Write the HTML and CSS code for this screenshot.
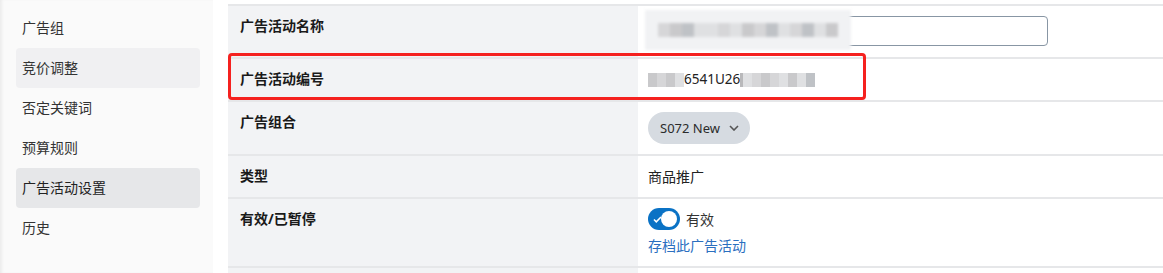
FILE: index.html
```html
<!DOCTYPE html>
<html lang="zh-CN">
<head>
    <meta charset="UTF-8">
    <title>广告活动设置</title>
    <link rel="stylesheet" href="styles.css">
</head>
<body>

    <div class="sidebar">
        <div class="nav-item">广告组</div>
        <div class="nav-item hover">竞价调整</div>
        <div class="nav-item">否定关键词</div>
        <div class="nav-item">预算规则</div>
        <div class="nav-item active">广告活动设置</div>
        <div class="nav-item">历史</div>
    </div>

    <div class="main">
        <div class="row row-name">
            <div class="label">广告活动名称</div>
            <div class="value">
                <div class="name-input">
                    <div class="blur-cover">
                        <span class="blk b2"></span><span class="blk b1"></span><span class="blk b4"></span><span class="blk b3"></span>
                        <span class="blk b3"></span><span class="blk b2"></span><span class="blk b3"></span><span class="blk b1"></span>
                        <span class="blk b2"></span><span class="blk b4"></span><span class="blk b3"></span><span class="blk b2"></span>
                        <span class="blk b4"></span><span class="blk b3"></span><span class="blk b1"></span>
                    </div>
                </div>
            </div>
        </div>

        <div class="row">
            <div class="label">广告活动编号</div>
            <div class="value id-text">
                <span class="blk b1"></span><span class="blk b2"></span><span class="blk b1"></span><span class="blk b3"></span>
                <span class="id-clear">6541U26</span><span class="blk b5"></span>
                <span class="blk b3"></span><span class="blk b2"></span><span class="blk b1"></span><span class="blk b2"></span>
                <span class="blk b3"></span><span class="blk b1"></span><span class="blk b3"></span><span class="blk b4"></span>
            </div>
        </div>

        <div class="row">
            <div class="label">广告组合</div>
            <div class="value">
                <span class="pill">S072 New
                    <svg width="10" height="6" viewBox="0 0 10 6"><path d="M1 1l4 4 4-4" fill="none" stroke="#555" stroke-width="1.6"/></svg>
                </span>
            </div>
        </div>

        <div class="row">
            <div class="label">类型</div>
            <div class="value">商品推广</div>
        </div>

        <div class="row row-status">
            <div class="label">有效/已暂停</div>
            <div class="value">
                <div class="toggle-line">
                    <span class="toggle">
                        <svg width="9" height="7" viewBox="0 0 10 8"><path d="M1 4l2.6 2.6L9 1.2" fill="none" stroke="#fff" stroke-width="1.8"/></svg>
                        <span class="knob"></span>
                    </span>
                    <span>有效</span>
                </div>
                <a class="archive" href="#">存档此广告活动</a>
            </div>
        </div>

        <div class="row row-empty">
            <div class="label"></div>
            <div class="value"></div>
        </div>

        <div class="highlight-box"></div>
    </div>

</body>
</html>
```

FILE: styles.css
```css
body {
    margin: 0;
    height: 273px;
    overflow: hidden;
    display: flex;
    background: #fff;
    color: #222;
    font-family: 'Noto Sans', 'Noto Sans CJK SC', sans-serif;
    font-size: 14px;
}
.sidebar {
    width: 213px;
    flex-shrink: 0;
    background: #fafafa;
    box-shadow: inset 3px 0 3px -1px rgba(0, 0, 0, 0.06);
    padding-top: 8px;
    box-sizing: border-box;
}
.nav-item {
    margin: 0 13px 0 16px;
    height: 40px;
    line-height: 39px;
    padding-left: 6px;
    border-radius: 4px;
    color: #333;
}
.nav-item.hover {
    background: #f0f0f2;
}
.nav-item.active {
    background: #e6e7e9;
    color: #222;
}
.main {
    position: relative;
    flex: 1;
    height: 273px;
    margin-left: 15px;
    padding-top: 4px;
    box-sizing: border-box;
    overflow: hidden;
}
.row {
    display: grid;
    grid-template-columns: 410px 1fr;
    border-top: 2px solid #e6e7e9;
}
.label {
    background: #f2f3f5;
    padding: 10px 12px;
    line-height: 20px;
    font-weight: bold;
    color: #1a1a1a;
}
.value {
    padding: 10px 10px;
    line-height: 21px;
}
.row-name .value {
    padding-top: 10px;
    padding-bottom: 11px;
}
.name-input {
    position: relative;
    width: 400px;
    height: 30px;
    box-sizing: border-box;
    border: 1px solid #8896a4;
    border-radius: 4px;
}
.blur-cover {
    position: absolute;
    left: -4px;
    top: -7px;
    width: 206px;
    height: 40px;
    background: #f1f2f4;
    filter: blur(1.5px);
    display: flex;
    align-items: center;
    padding-left: 13px;
    box-sizing: border-box;
}
.blk {
    display: inline-block;
    width: 12px;
    height: 14px;
    vertical-align: middle;
}
.b1 { background: #c9c9cb; }
.b2 { background: #d6d6d8; }
.b3 { background: #dfe0e2; }
.b4 { background: #bfc2c6; }
.b5 { background: #b8b8ba; }
.id-text {
    display: flex;
    align-items: center;
    padding-left: 10px;
}
.id-text .blk {
    width: 9px;
    filter: blur(0.6px);
}
.id-text .b5 {
    width: 3px;
}
.id-clear {
    margin-left: 0;
    color: #222;
    font-size: 13.5px;
}
.pill {
    display: inline-flex;
    align-items: center;
    gap: 9px;
    height: 32px;
    padding: 0 11px 0 12px;
    border-radius: 16px;
    background: #d6dbe1;
    color: #2b2b2b;
    font-size: 13px;
    box-sizing: border-box;
}
.row-status .value {
    padding-top: 9px;
    padding-bottom: 9px;
}
.toggle-line {
    display: flex;
    align-items: center;
    gap: 6px;
    height: 22px;
    color: #333;
}
.toggle {
    position: relative;
    display: inline-flex;
    align-items: center;
    width: 32px;
    height: 22px;
    border-radius: 11px;
    background: #0a72c5;
    padding-left: 5px;
    box-sizing: border-box;
}
.knob {
    position: absolute;
    right: 3px;
    top: 3px;
    width: 16px;
    height: 16px;
    border-radius: 50%;
    background: #fff;
}
.archive {
    display: block;
    margin-top: 5px;
    line-height: 22px;
    color: #2b6fbf;
    text-decoration: none;
}
.row-empty {
    height: 10px;
}
.row-empty .label,
.row-empty .value {
    padding: 0;
}
.highlight-box {
    position: absolute;
    left: 0;
    top: 53px;
    width: 638px;
    height: 47px;
    box-sizing: border-box;
    border: 3px solid #f5211f;
    border-radius: 4px;
}
```
